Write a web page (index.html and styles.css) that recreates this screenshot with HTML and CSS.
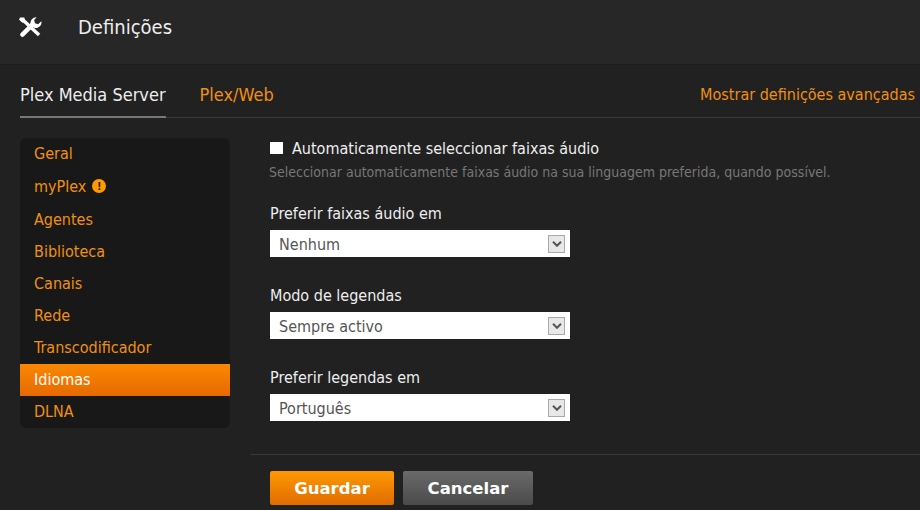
FILE: index.html
```html
<!DOCTYPE html>
<html lang="pt">
<head>
<meta charset="utf-8">
<title>Definições</title>
<link rel="stylesheet" href="styles.css">
</head>
<body>
<header class="topbar">
  <svg class="tools" viewBox="0 0 24 21" width="23" height="20" aria-hidden="true">
    <path d="M3.5 2.5 21 19" fill="none" stroke="#fff" stroke-width="3.6"/>
    <path d="M1 0.5 5.5 0.5 6.5 4.5 3.5 6 0 3z" fill="#fff"/>
    <path d="M3.5 18.5 14 8" fill="none" stroke="#fff" stroke-width="4.6" stroke-linecap="round"/>
    <path d="M18.5 0.2a6 6 0 0 0-6.3 7.6l3.6 3.6a6 6 0 0 0 7.6-6.9l-3.4 3-3.3-1-.9-3.3z" fill="#fff"/>
  </svg>
  <h1 class="title">Definições</h1>
</header>
<nav class="tabs">
  <a class="tab tab-active">Plex Media Server</a>
  <a class="tab">Plex/Web</a>
  <a class="advanced">Mostrar definições avançadas</a>
</nav>
<main class="layout">
  <ul class="menu">
    <li class="item item-first">Geral</li>
    <li class="item item-tall">myPlex <span class="alert">!</span></li>
    <li class="item">Agentes</li>
    <li class="item">Biblioteca</li>
    <li class="item">Canais</li>
    <li class="item">Rede</li>
    <li class="item">Transcodificador</li>
    <li class="item item-active">Idiomas</li>
    <li class="item">DLNA</li>
  </ul>
  <section class="panel">
    <label class="check"><span class="box"></span>Automaticamente seleccionar faixas áudio</label>
    <p class="hint">Seleccionar automaticamente faixas áudio na sua linguagem preferida, quando possível.</p>
    <div class="field">
      <div class="label">Preferir faixas áudio em</div>
      <div class="select"><span>Nenhum</span><span class="arrow"><svg viewBox="0 0 10 6" width="10" height="6"><path d="M1 .8l4 4 4-4" fill="none" stroke="#555" stroke-width="2"/></svg></span></div>
    </div>
    <div class="field">
      <div class="label">Modo de legendas</div>
      <div class="select"><span>Sempre activo</span><span class="arrow"><svg viewBox="0 0 10 6" width="10" height="6"><path d="M1 .8l4 4 4-4" fill="none" stroke="#555" stroke-width="2"/></svg></span></div>
    </div>
    <div class="field">
      <div class="label">Preferir legendas em</div>
      <div class="select"><span>Português</span><span class="arrow"><svg viewBox="0 0 10 6" width="10" height="6"><path d="M1 .8l4 4 4-4" fill="none" stroke="#555" stroke-width="2"/></svg></span></div>
    </div>
    <div class="actions">
      <button class="btn btn-save">Guardar</button>
      <button class="btn btn-cancel">Cancelar</button>
    </div>
  </section>
</main>
</body>
</html>
```
FILE: styles.css
```css
* { box-sizing: border-box; }
html, body { margin: 0; height: 510px; overflow: hidden; }
body { background: #212121; color: #eee; font-family: "DejaVu Sans Condensed", "DejaVu Sans", sans-serif; font-stretch: condensed; font-size: 16px; }
.topbar { height: 65px; background: #272727; border-bottom: 1px solid #1c1c1c; display: flex; align-items: center; padding: 0 0 10px 19px; }
.tools { flex: none; }
.title { margin: -1px 0 0 36px; font-size: 20px; font-weight: 400; color: #eee; }
.tabs { margin-left: 20px; height: 53px; display: flex; align-items: flex-end; border-bottom: 1px solid #3a3a3a; }
.tab { height: 53px; display: flex; align-items: center; padding-top: 8px; margin-right: 34px; font-size: 18px; color: #f0900f; }
.tab-active { color: #eee; border-bottom: 2px solid #777; margin-bottom: -1px; }
.advanced { margin-left: auto; margin-right: 5px; height: 53px; display: flex; align-items: center; padding-top: 8px; font-size: 16px; color: #f0900f; }
.layout { display: flex; padding: 20px 0 0 20px; align-items: flex-start; }
.menu { width: 210px; height: 290px; flex: none; margin: 0; padding: 0; list-style: none; background: #181818; border-radius: 6px; overflow: hidden; }
.item { height: 32px; padding: 0 14px; display: flex; align-items: center; color: #f0900f; font-size: 16px; }
.item-first { height: 31px; }
.item-tall { height: 34px; }
.item-active { color: #fff; background: linear-gradient(#fb8800, #e66900); margin-top: 1px; margin-bottom: -1px; padding-bottom: 2px; }
.alert { display: inline-flex; width: 14px; height: 14px; margin-left: 6px; border-radius: 50%; background: #f90; color: #222; font-size: 11px; font-weight: 700; align-items: center; justify-content: center; }
.panel { width: 670px; margin-left: 20px; }
.check { display: flex; align-items: center; margin-left: 20px; height: 20px; font-size: 16px; color: #eee; }
.box { width: 13px; height: 12px; background: #fff; margin-right: 9px; }
.hint { margin: 6px 0 0 19px; font-size: 14px; color: #777; }
.field { margin: 0 0 0 20px; padding-top: 24px; }
.field + .field { padding-top: 29px; }
.label { font-size: 16px; color: #eee; height: 26px; }
.select { width: 300px; height: 27px; background: #fff; display: flex; align-items: center; justify-content: space-between; padding: 1px 5px 0 9px; color: #555; font-size: 16px; }
.arrow { width: 17px; height: 18px; margin-top: -1px; background: #e8e8e8; border: 1px solid #aaa; display: flex; align-items: center; justify-content: center; }
.actions { border-top: 1px solid #3a3a3a; margin-top: 33px; padding: 16px 0 0 20px; display: flex; gap: 9px; }
.btn { height: 34px; border: 0; border-radius: 2px; font-family: "DejaVu Sans", sans-serif; font-weight: 700; font-stretch: normal; font-size: 16.5px; color: #fff; }
.btn-save { width: 124px; background: linear-gradient(#f90, #e06c00); }
.btn-cancel { width: 130px; background: linear-gradient(#6a6a6a, #4a4a4a); }
```
